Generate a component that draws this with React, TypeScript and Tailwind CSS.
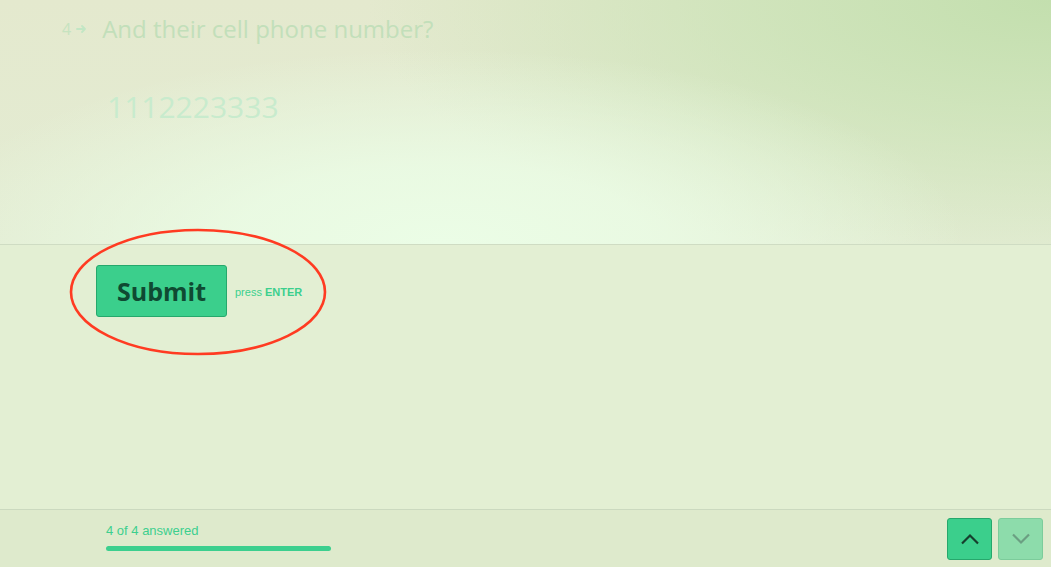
import React from "react";

export default function App() {
  return (
    <div className="relative w-[1051px] h-[567px] overflow-hidden flex flex-col bg-[#e3efd3]" style={{ fontFamily: '"Open Sans", sans-serif' }}>
      {/* Top question area */}
      <div className="relative h-[245px] shrink-0 border-b border-[#cfdcc3] bg-[radial-gradient(ellipse_50%_80%_at_42%_100%,#ebfde6_0%,rgba(235,253,230,0.8)_40%,rgba(235,253,230,0)_100%),radial-gradient(ellipse_65%_110%_at_100%_0%,#c3dfae_0%,rgba(200,226,180,0.7)_45%,rgba(214,233,199,0)_100%),linear-gradient(to_bottom,#e4e9ce_0%,#e3ecd3_100%)]">
        <div className="flex items-center pl-[62px] pt-[12px]">
          <span className="text-[16px] text-[#c6e3c0] leading-none">4</span>
          <svg className="ml-[5px] mr-[15px]" width="11" height="10" viewBox="0 0 11 10">
            <path d="M1 5h8M6 2l3 3-3 3" stroke="#c2e6c4" strokeWidth="1.8" fill="none" strokeLinecap="round" strokeLinejoin="round" />
          </svg>
          <span className="text-[24px] leading-[34px] text-[#c2dfba]">And their cell phone number?</span>
        </div>
        <div className="pl-[107px] pt-[41px] text-[30px] leading-[40px] text-[#c8ebcd]">1112223333</div>
      </div>

      {/* Middle submit area */}
      <div className="flex-1 flex items-start pl-[96px] pt-[20px] border-b border-[#cbd9bf]">
        <div className="flex items-center">
          <button className="w-[131px] h-[52px] rounded-[3px] bg-[#3bcf8c] border border-[#26a86c] text-[25px] font-bold text-[#0f4a32] flex items-center justify-center leading-none">
            Submit
          </button>
          <span className="ml-[8px] mt-[2px] text-[11px] text-[#3ccf8e]" style={{ fontFamily: '"Liberation Sans", Arial, sans-serif' }}>
            press <b>ENTER</b>
          </span>
        </div>
      </div>

      {/* Footer */}
      <div className="h-[57px] shrink-0 bg-[#deeacc] flex items-start justify-between">
        <div className="pl-[106px] pt-[13px]" style={{ fontFamily: '"Liberation Sans", Arial, sans-serif' }}>
          <div className="text-[13px] leading-[16px] text-[#3ccf8e]">4 of 4 answered</div>
          <div className="mt-[7px] w-[225px] h-[5px] rounded-full bg-[#3ccf8e]" />
        </div>
        <div className="flex gap-[6px] pr-[8px] pt-[8px]">
          <button className="w-[45px] h-[42px] rounded-[3px] bg-[#3bcf8c] border border-[#26a86c] flex items-center justify-center">
            <svg width="20" height="12" viewBox="0 0 20 12">
              <path d="M2 10.5L10 2.5l8 8" stroke="#163f2d" strokeWidth="2.2" fill="none" />
            </svg>
          </button>
          <button className="w-[45px] h-[42px] rounded-[3px] bg-[#8ddcab] border border-[#7ccc9b] flex items-center justify-center">
            <svg width="20" height="12" viewBox="0 0 20 12">
              <path d="M2 1.5l8 8 8-8" stroke="#6b9f82" strokeWidth="2.2" fill="none" />
            </svg>
          </button>
        </div>
      </div>

      {/* Red annotation ellipse */}
      <svg className="absolute left-0 top-0 pointer-events-none" width="1051" height="567">
        <ellipse cx="198" cy="292" rx="127" ry="62" fill="none" stroke="#ff3b22" strokeWidth="2.6" />
      </svg>
    </div>
  );
}
